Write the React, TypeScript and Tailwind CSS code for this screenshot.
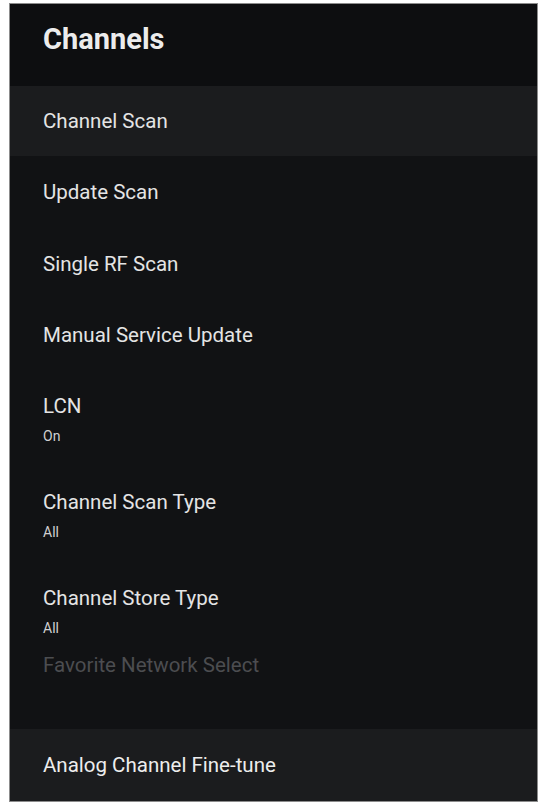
import React from "react";

type Item = {
  label: string;
  value?: string;
  disabled?: boolean;
};

const scans: Item[] = [
  { label: "Update Scan" },
  { label: "Single RF Scan" },
  { label: "Manual Service Update" },
];

const options: Item[] = [
  { label: "LCN", value: "On" },
  { label: "Channel Scan Type", value: "All" },
  { label: "Channel Store Type", value: "All" },
];

export default function App() {
  return (
    <div
      className="w-[540px] h-[806px] bg-white pt-[3px] pl-[9px]"
      style={{ fontFamily: "Roboto, 'Noto Sans', Arial, sans-serif" }}
    >
      <div className="w-[529px] h-[799px] border border-[#8c8c8c] bg-[#111214] flex flex-col overflow-hidden">
        <div className="h-[82px] shrink-0 bg-[#0d0e10] flex items-center px-[33px] pb-[10px]">
          <h1 className="text-[29px] font-bold text-[#ececec]">Channels</h1>
        </div>

        <div className="h-[70px] shrink-0 bg-[#1b1c1e] flex items-center px-[33px]">
          <span className="text-[20.5px] text-[#e4e4e4]">Channel Scan</span>
        </div>

        {scans.map((s, i) => (
          <div
            key={s.label}
            className={
              i === 2
                ? "h-[70px] shrink-0 flex items-center px-[33px]"
                : "h-[72px] shrink-0 flex items-center px-[33px]"
            }
          >
            <span className="text-[20.5px] text-[#e4e4e4]">{s.label}</span>
          </div>
        ))}

        {options.map((o, i) => (
          <div
            key={o.label}
            className={
              i === 2
                ? "shrink-0 flex flex-col px-[33px] pt-[24px] pb-[10px]"
                : "shrink-0 flex flex-col px-[33px] pt-[24px] pb-[22px]"
            }
          >
            <span className="text-[20.5px] leading-[24px] text-[#e4e4e4]">{o.label}</span>
            <span className="mt-[10px] text-[14px] leading-[16px] text-[#d0d0d0]">{o.value}</span>
          </div>
        ))}

        <div className="h-[38px] shrink-0 flex items-center px-[33px]">
          <span className="text-[20.5px] text-[#4c4d50]">Favorite Network Select</span>
        </div>

        <div className="flex-1" />

        <div className="h-[72px] shrink-0 bg-[#1b1c1e] flex items-center px-[33px]">
          <span className="text-[20.5px] text-[#ededed]">Analog Channel Fine-tune</span>
        </div>
      </div>
    </div>
  );
}
